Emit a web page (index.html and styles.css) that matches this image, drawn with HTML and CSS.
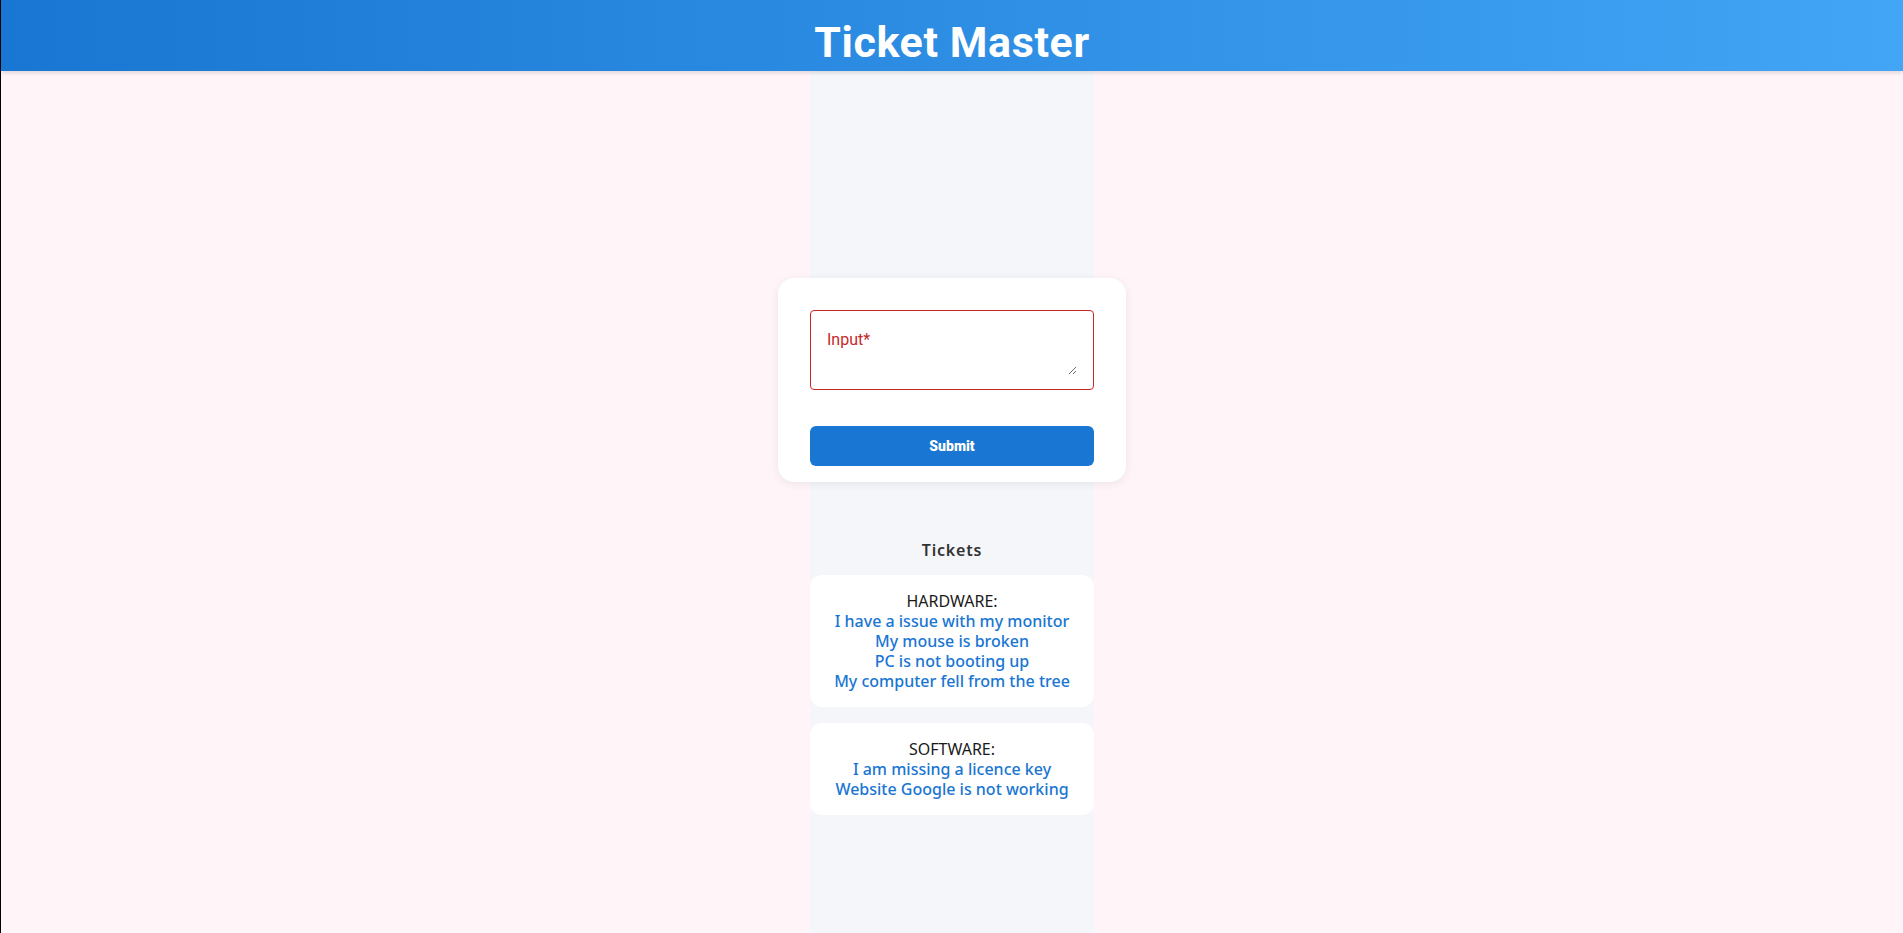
FILE: index.html
```html
<!DOCTYPE html>
<html lang="en">
<head>
<meta charset="utf-8">
<title>Ticket Master</title>
<link rel="stylesheet" href="styles.css">
</head>
<body>
<div class="page">
  <header class="app-header">
    <h1 class="app-title">Ticket Master</h1>
  </header>
  <main class="column">
    <form class="form-card">
      <div class="input-box">
        <textarea class="ticket-input" placeholder="Input*"></textarea>
      </div>
      <button type="button" class="submit-btn">Submit</button>
    </form>
    <section class="tickets">
      <h2 class="tickets-title">Tickets</h2>
      <div class="ticket-card">
        <div class="category">HARDWARE:</div>
        <div class="item">I have a issue with my monitor</div>
        <div class="item">My mouse is broken</div>
        <div class="item">PC is not booting up</div>
        <div class="item">My computer fell from the tree</div>
      </div>
      <div class="ticket-card">
        <div class="category">SOFTWARE:</div>
        <div class="item">I am missing a licence key</div>
        <div class="item">Website Google is not working</div>
      </div>
    </section>
  </main>
</div>
</body>
</html>
```

FILE: styles.css
```css
html, body {
  margin: 0;
  padding: 0;
  height: 100%;
}
body {
  background: #fff5f8;
  font-family: "Noto Sans", "Open Sans", sans-serif;
}
.page {
  min-height: 100vh;
  border-left: 1px solid #000;
  display: flex;
  flex-direction: column;
  box-sizing: border-box;
}
.app-header {
  height: 71px;
  box-sizing: border-box;
  padding-top: 17px;
  background: linear-gradient(90deg, #1976d2 0%, #42a5f5 100%);
  box-shadow: 0 2px 4px rgba(0, 0, 0, 0.12);
  text-align: center;
  position: relative;
  z-index: 1;
}
.app-title {
  margin: 0;
  font-family: Roboto, "Liberation Sans", sans-serif;
  font-weight: 700;
  font-size: 43px;
  line-height: normal;
  color: #fff;
  letter-spacing: 0.6px;
}
.column {
  flex: 1;
  width: 284px;
  margin: 0 auto;
  background: #f5f6fa;
  padding-top: 207px;
  display: flex;
  flex-direction: column;
  align-items: center;
}
.form-card {
  width: 348px;
  box-sizing: border-box;
  margin: 0 -32px;
  background: #fff;
  border-radius: 16px;
  box-shadow: 0 2px 10px rgba(0, 0, 0, 0.07);
  padding: 32px 32px 16px;
  display: flex;
  flex-direction: column;
  gap: 36px;
}
.input-box {
  height: 80px;
  box-sizing: border-box;
  border: 1px solid #c62828;
  border-radius: 4px;
  padding: 17px 16px 14px;
  background: #fff;
}
.ticket-input {
  display: block;
  width: 100%;
  height: 100%;
  box-sizing: border-box;
  border: 0;
  padding: 0;
  margin: 0;
  font-family: Roboto, sans-serif;
  font-size: 16px;
  line-height: 24px;
  color: #222;
  outline: none;
  background: transparent;
}
.ticket-input::placeholder {
  color: #c62828;
  opacity: 1;
}
.submit-btn {
  height: 40px;
  border: 0;
  border-radius: 6px;
  background: #1976d2;
  color: #fff;
  font-family: Roboto, sans-serif;
  font-weight: 900;
  font-size: 14px;
}
.tickets {
  width: 284px;
  margin-top: 56px;
  display: flex;
  flex-direction: column;
  gap: 16px;
}
.tickets-title {
  margin: 0 0 -3px;
  text-align: center;
  font-size: 16px;
  line-height: 24px;
  font-weight: 600;
  letter-spacing: 0.8px;
  color: #333;
}
.ticket-card {
  background: #fff;
  border-radius: 12px;
  padding: 16px 8px;
  text-align: center;
  font-size: 16px;
  line-height: 20px;
}
.category {
  color: #1a1a1a;
  font-weight: 400;
}
.item {
  color: #1976d2;
  font-weight: 500;
}
```
